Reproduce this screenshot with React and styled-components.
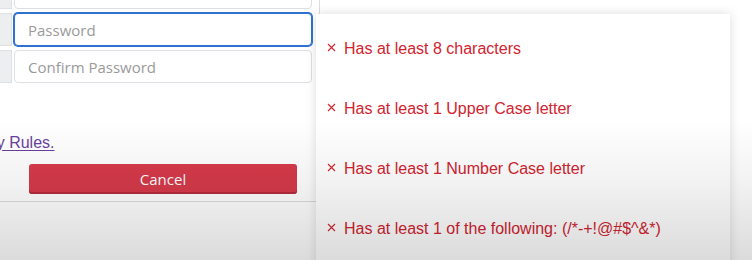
import React from 'react';
import styled, { createGlobalStyle } from 'styled-components';

const GlobalStyle = createGlobalStyle`
  html, body {
    margin: 0;
    padding: 0;
    background: #ffffff;
    overflow: hidden;
  }
  body {
    font-family: "Liberation Sans", Arial, sans-serif;
  }
`;

const Page = styled.div`
  position: relative;
  width: 752px;
  height: 260px;
  overflow: hidden;
`;

const Card = styled.div`
  width: 320px;
  margin-top: -24px;
  background: #fff;
  border-right: 1px solid #dcdcdc;
  border-bottom: 1px solid #dcdcdc;
  border-bottom-right-radius: 4px;
  padding: 0 7px 7px 0;
  box-sizing: border-box;
`;

const Fields = styled.div`
  display: flex;
  flex-direction: column;
  gap: 4px;
`;

const Row = styled.div`
  display: flex;
  gap: 2px;
  height: 33px;
`;

const Addon = styled.div`
  width: 11px;
  background: #eceeef;
  border: 1px solid #dfe2e5;
  border-left: none;
`;

const Input = styled.input`
  flex: 1;
  min-width: 0;
  box-sizing: border-box;
  height: 100%;
  border: 1px solid ${p => (p.$focused ? '#2d72d2' : '#dcdfe3')};
  box-shadow: ${p => (p.$focused ? '0 0 0 1px #2d72d2' : 'none')};
  border-radius: 4px;
  padding: 0 13px;
  font-family: "Open Sans", "Noto Sans", sans-serif;
  font-size: 15px;
  color: #555;
  outline: none;
  background: #fff;

  &::placeholder {
    color: #9a9a9a;
  }
`;

const PolicyLine = styled.div`
  margin-top: 50px;
  height: 20px;
  font-size: 16px;
  line-height: 20px;
  white-space: nowrap;
`;

const PolicyLink = styled.a`
  display: inline-block;
  margin-left: -38px;
  color: #6b3fa0;
  text-decoration: underline;
  text-underline-offset: 2px;
`;

const ButtonRow = styled.div`
  display: flex;
  padding: 11px 15px 0 29px;
`;

const CancelButton = styled.button`
  flex: 1;
  height: 30px;
  border: none;
  border-radius: 3px;
  background: #d63a4a;
  box-shadow: inset 0 -2px 0 #b62c3a;
  color: #fff;
  font-family: "Open Sans", "Noto Sans", sans-serif;
  font-size: 15px;
  cursor: pointer;
`;

const Popover = styled.div`
  position: absolute;
  left: 316px;
  top: 14px;
  width: 414px;
  height: 280px;
  background: #fff;
  box-shadow: 0 0 10px rgba(0, 0, 0, 0.14);
  padding-top: 25px;
  box-sizing: border-box;
`;

const RuleList = styled.ul`
  list-style: none;
  margin: 0;
  padding: 0 0 0 10px;
  display: flex;
  flex-direction: column;
  gap: 40px;
`;

const Rule = styled.li`
  display: flex;
  align-items: center;
  height: 20px;
  color: #d2232f;
  font-size: 16px;
  white-space: nowrap;
`;

const Cross = styled.svg`
  width: 9px;
  height: 9px;
  margin: -4px 8px 0 1px;
  flex-shrink: 0;
`;

const Shade = styled.div`
  position: absolute;
  inset: 0;
  pointer-events: none;
  background: linear-gradient(
    to bottom,
    rgba(0, 0, 0, 0) 0%,
    rgba(0, 0, 0, 0) 46%,
    rgba(0, 0, 0, 0.05) 70%,
    rgba(0, 0, 0, 0.14) 100%
  );
`;

const rules = [
  'Has at least 8 characters',
  'Has at least 1 Upper Case letter',
  'Has at least 1 Number Case letter',
  'Has at least 1 of the following: (/*-+!@#$^&*)',
];

const App = () => {
  return (
    <>
      <GlobalStyle />
      <Page>
        <Card>
          <Fields>
            <Row>
              <Addon />
              <Input type="text" />
            </Row>
            <Row>
              <Addon />
              <Input type="password" placeholder="Password" $focused />
            </Row>
            <Row>
              <Addon />
              <Input type="password" placeholder="Confirm Password" />
            </Row>
          </Fields>
          <PolicyLine>
            <PolicyLink href="#">Policy Rules.</PolicyLink>
          </PolicyLine>
          <ButtonRow>
            <CancelButton>Cancel</CancelButton>
          </ButtonRow>
        </Card>

        <Popover>
          <RuleList>
            {rules.map(rule => (
              <Rule key={rule}>
                <Cross viewBox="0 0 9 9">
                  <path d="M1 1 L8 8 M8 1 L1 8" stroke="#d2232f" strokeWidth="1.1" fill="none" />
                </Cross>
                {rule}
              </Rule>
            ))}
          </RuleList>
        </Popover>

        <Shade />
      </Page>
    </>
  );
};

export default App;
